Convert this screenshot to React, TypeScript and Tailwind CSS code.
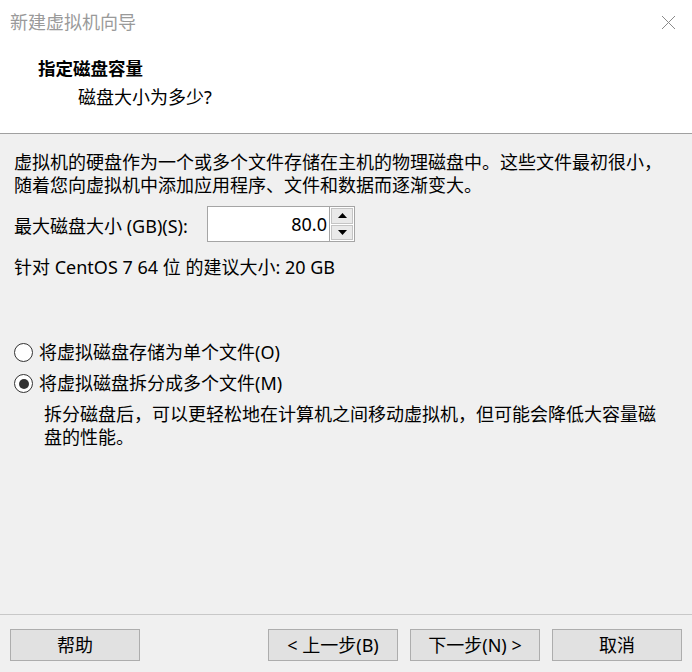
import React, { useState } from 'react';

const FONT = '"Noto Sans", "Noto Sans CJK SC", sans-serif';

function Radio({ checked, label, onClick }: { checked: boolean; label: string; onClick: () => void }) {
  return (
    <div className="flex h-[31px] items-center cursor-default" onClick={onClick}>
      <span className="ml-[14px] mr-[6px] flex h-[19px] w-[19px] items-center justify-center rounded-full border border-[#333333] bg-white">
        {checked && <span className="h-[10px] w-[10px] rounded-full bg-[#333333]" />}
      </span>
      <span>{label}</span>
    </div>
  );
}

function WizardButton({ children }: { children: React.ReactNode }) {
  return (
    <button className="flex h-[32px] w-[130px] items-center justify-center border border-[#adadad] bg-[#e1e1e1] text-[18px] text-black">
      {children}
    </button>
  );
}

export default function App() {
  const [split, setSplit] = useState(true);
  const [size, setSize] = useState(80);

  return (
    <div
      className="flex h-[672px] w-[692px] flex-col bg-[#f0f0f0] text-[18px] text-black"
      style={{ fontFamily: FONT }}
    >
      {/* Header */}
      <div className="h-[134px] shrink-0 border-b border-[#a0a0a0] bg-white">
        <div className="flex h-[44px] items-center justify-between pl-[10px] pr-[16px]">
          <span className="text-[#9a9a9a]">新建虚拟机向导</span>
          <svg width="15" height="15" viewBox="0 0 15 15" className="text-[#8a8a8a]">
            <path d="M1 1 L14 14 M14 1 L1 14" stroke="currentColor" strokeWidth="1" fill="none" />
          </svg>
        </div>
        <div className="mt-[12px] pl-[38px] text-[17.5px] font-bold leading-[24px]">指定磁盘容量</div>
        <div className="mt-[5px] pl-[78px] leading-[24px]">磁盘大小为多少?</div>
      </div>

      {/* Body */}
      <div className="flex-1">
        <p className="px-[14px] pt-[17px] leading-[23px]">
          虚拟机的硬盘作为一个或多个文件存储在主机的物理磁盘中。这些文件最初很小，
          <br />
          随着您向虚拟机中添加应用程序、文件和数据而逐渐变大。
        </p>

        <div className="mt-[9px] flex items-center px-[14px]">
          <span className="mt-[4px] w-[193px]">最大磁盘大小 (GB)(S):</span>
          <div className="flex h-[36px]">
            <div className="flex w-[123px] items-center justify-end border border-[#a5a5a5] bg-white pr-[2px]">
              {size.toFixed(1)}
            </div>
            <div className="flex w-[25px] flex-col border border-l-0 border-[#a5a5a5] bg-white p-[1px]">
              <button
                className="flex flex-1 items-center justify-center border border-[#c4c4c4] bg-[#e9e9e9]"
                onClick={() => setSize(size + 1)}
              >
                <svg width="9" height="5" viewBox="0 0 9 5">
                  <path d="M0 5 L4.5 0 L9 5 Z" fill="#000" />
                </svg>
              </button>
              <button
                className="mt-[1px] flex flex-1 items-center justify-center border border-[#c4c4c4] bg-[#e9e9e9]"
                onClick={() => setSize(Math.max(1, size - 1))}
              >
                <svg width="9" height="5" viewBox="0 0 9 5">
                  <path d="M0 0 L9 0 L4.5 5 Z" fill="#000" />
                </svg>
              </button>
            </div>
          </div>
        </div>

        <div className="mt-[13px] px-[14px] leading-[24px]">针对 CentOS 7 64 位 的建议大小: 20 GB</div>

        <div className="mt-[58px]">
          <Radio checked={!split} label="将虚拟磁盘存储为单个文件(O)" onClick={() => setSplit(false)} />
          <Radio checked={split} label="将虚拟磁盘拆分成多个文件(M)" onClick={() => setSplit(true)} />
          <p className="mt-[4px] pl-[44px] pr-[14px] leading-[23px]">
            拆分磁盘后，可以更轻松地在计算机之间移动虚拟机，但可能会降低大容量磁
            <br />
            盘的性能。
          </p>
        </div>
      </div>

      {/* Footer */}
      <div className="flex h-[58px] shrink-0 items-start border-t border-[#c8c8c8] px-[10px] pt-[14px]">
        <WizardButton>帮助</WizardButton>
        <div className="ml-auto flex gap-[12px]">
          <WizardButton>&lt; 上一步(B)</WizardButton>
          <WizardButton>下一步(N) &gt;</WizardButton>
          <WizardButton>取消</WizardButton>
        </div>
      </div>
    </div>
  );
}
